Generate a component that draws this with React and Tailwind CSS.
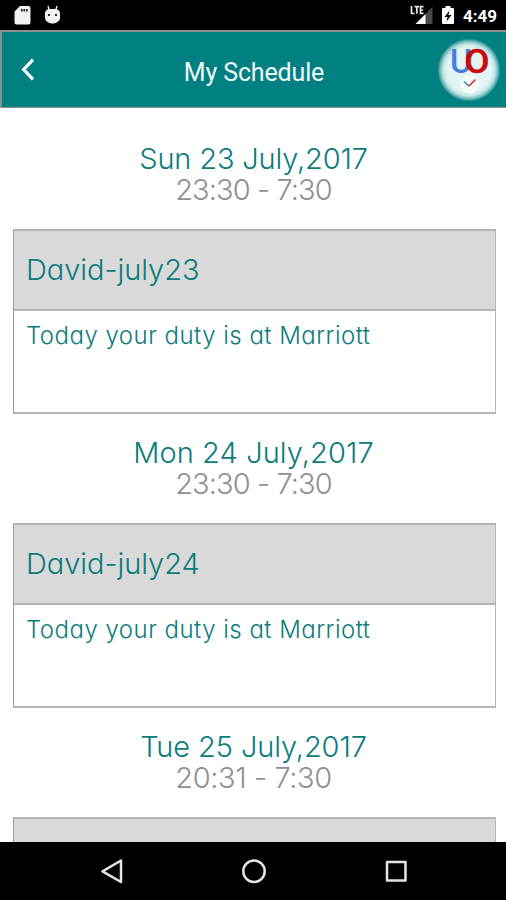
import React from 'react';

const shifts = [
  {
    date: 'Sun 23 July,2017',
    time: '23:30 - 7:30',
    title: 'David-july23',
    note: 'Today your duty is at Marriott',
    dateClass: 'tracking-[-0.15px]',
    timeClass: 'tracking-[-0.9px]',
  },
  {
    date: 'Mon 24 July,2017',
    time: '23:30 - 7:30',
    title: 'David-july24',
    note: 'Today your duty is at Marriott',
    dateClass: 'tracking-[0.1px]',
    timeClass: 'tracking-[-0.9px]',
  },
  {
    date: 'Tue 25 July,2017',
    time: '20:31 - 7:30',
    dateClass: 'tracking-[-0.1px]',
    timeClass: 'tracking-[-0.4px]',
  },
];

function StatusBar() {
  return (
    <div className="h-[30px] shrink-0 bg-black flex items-center justify-between pl-[14px] pr-[9px]">
      <div className="flex items-center gap-[13px]">
        <svg width="17" height="20" viewBox="0 0 17 20" fill="#f2f2f2">
          <path fillRule="evenodd" d="M6 1h8.500a2 2 0 0 1 2 2v14.500a2 2 0 0 1-2 2h-12a2 2 0 0 1-2-2V6.500zM7 4v2.500h1.500V4zm2.500 0v2.500h1.500V4zm2.500 0v2.500h1.500V4z" />
        </svg>
        <svg width="17" height="20" viewBox="0 0 17 20">
          <path d="M4 1l1.500 5M13 1l-1.500 5" stroke="#f2f2f2" strokeWidth="1.300" />
          <path d="M1 8c0-2 2-4 5-4h5c3 0 5 2 5 4v4.500c0 3.500-3.500 6-7.500 6S1 16 1 12.500z" fill="#f2f2f2" />
          <circle cx="5" cy="10" r="1.100" />
          <circle cx="12" cy="10" r="1.100" />
        </svg>
      </div>
      <div className="flex items-center">
        <svg width="24" height="20" viewBox="0 0 24 20" className="mr-[8px]">
          <path d="M22.500 2v17H5.500z" fill="#4a4a4a" />
          <path d="M15.500 9v10H5.500z" fill="#fff" />
          <path d="M1.500 1v7.500h3.200M4.500 1.700h4.500M6.800 1.700v7M13.500 1.700h-3v6.600h3M10.500 5h2.700" stroke="#e8e8e8" strokeWidth="1.700" fill="none" />
        </svg>
        <svg width="12" height="20" viewBox="0 0 12 20" className="mr-[9px]">
          <path d="M3.500 1h5v2H11a1 1 0 0 1 1 1v14a1 1 0 0 1-1 1H1a1 1 0 0 1-1-1V4a1 1 0 0 1 1-1h2.500z" fill="#fff" />
          <path d="M7.500 5.500L2.500 12H5.500L4.500 16.500L9.500 10H6.500z" />
        </svg>
        <span className="font-['Roboto',sans-serif] font-bold text-[17px] leading-5 text-white pt-px">4:49</span>
      </div>
    </div>
  );
}

function Logo() {
  return (
    <svg width="64" height="64" viewBox="0 0 64 64">
      <defs>
        <radialGradient id="glow">
          <stop offset="0.700" stopColor="#e2f4f4" />
          <stop offset="0.820" stopColor="#c3e5e5" />
          <stop offset="0.920" stopColor="#6bb8b8" />
          <stop offset="1" stopColor="#008080" />
        </radialGradient>
      </defs>
      <circle cx="32" cy="32" r="31.500" fill="url(#glow)" />
      <circle cx="32.500" cy="46" r="9.500" fill="#f3fbfb" />
      <text x="13" y="34.500" fontFamily="Roboto, sans-serif" fontWeight="500" fontSize="33" textLength="22" lengthAdjust="spacingAndGlyphs" fill="#4380dd">U</text>
      <text x="27.500" y="34.500" fontFamily="Roboto, sans-serif" fontWeight="500" fontSize="33" textLength="25" lengthAdjust="spacingAndGlyphs" fill="#cc0808" stroke="#cc0808" strokeWidth="0.400">O</text>
      <path d="M27 43.500l5 4.500" stroke="#3b78c4" strokeWidth="1.600" />
      <path d="M32 48l6.500-6.500" stroke="#c93030" strokeWidth="1.600" />
    </svg>
  );
}

function Header() {
  return (
    <header className="h-[78px] shrink-0 bg-[#008080] border-t-2 border-b border-l-2 border-[#8b9190] flex items-center justify-between pl-[18px] pr-[5px]">
      <svg width="52" height="26" viewBox="0 0 52 26" fill="none" stroke="#fff" strokeWidth="3.200">
        <path d="M13 2.700L3.700 12.500l9.300 9.800" />
      </svg>
      <h1 className="font-['Roboto',sans-serif] font-[450] text-[25px] leading-8 text-[#f0fafa] pt-[7px] pr-px tracking-[-0.15px]">
        My Schedule
      </h1>
      <Logo />
    </header>
  );
}

function Shift({ shift }) {
  return (
    <section className="h-[294px] shrink-0 pl-[13px] pr-[10px]">
      <div className="h-[121px] pt-[35px] pr-[2px] text-center text-[29px] leading-[31px]">
        <p className={`text-[#0b7c7a] ${shift.dateClass}`}>{shift.date}</p>
        <p className={`text-[#8f8f8f] ${shift.timeClass}`}>{shift.time}</p>
      </div>
      <div className="h-[185px] border border-t-2 border-b-2 border-[#b5b5b5] border-l-[#999999] bg-white">
        <div className="h-[80px] border-b-2 border-[#b5b5b5] bg-[#d9d9d9] px-3 pt-[20px] text-[29px] leading-[38px] text-[#0b7c7a] tracking-[-0.05px]">
          {shift.title}
        </div>
        <p className="px-3 pt-[9px] text-[24px] leading-8 text-[#0b7c7a] tracking-[0.48px]">{shift.note}</p>
      </div>
    </section>
  );
}

function NavBar() {
  return (
    <nav className="h-[58px] shrink-0 bg-black">
      <svg width="506" height="58" viewBox="0 0 506 58" fill="none" stroke="#e4e4e4" strokeWidth="2.500" strokeLinejoin="round">
        <path d="M121 18.500v21.500L102.500 29.300z" />
        <circle cx="254" cy="29.300" r="10.700" />
        <rect x="387" y="20" width="18.500" height="18.500" />
      </svg>
    </nav>
  );
}

export default function App() {
  return (
    <div className="w-[506px] h-[900px] flex flex-col overflow-hidden bg-white">
      <StatusBar />
      <Header />
      <main className="flex-1 min-h-0 overflow-hidden flex flex-col font-['Inter',sans-serif] font-light [font-feature-settings:'cv11']">
        {shifts.map((shift) => (
          <Shift key={shift.date} shift={shift} />
        ))}
      </main>
      <NavBar />
    </div>
  );
}
